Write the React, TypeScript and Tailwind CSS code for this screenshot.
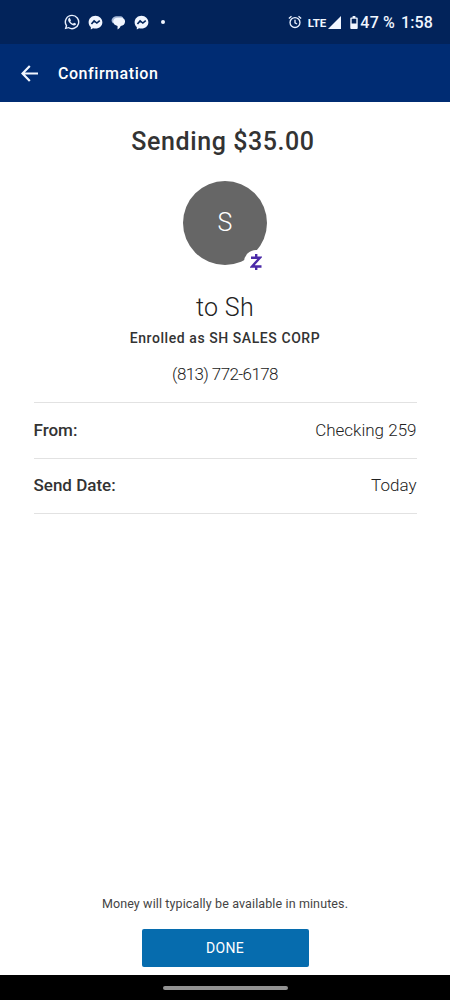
import React from "react";

function WhatsAppIcon() {
  return (
    <svg className="h-4 w-4" viewBox="0 0 24 24" fill="#e9f1ff">
      <path d="M12 1A11 11 0 0 0 2.6 17.7L1 23l5.5-1.5A11 11 0 1 0 12 1Zm0 2.1a8.9 8.9 0 1 1-4.9 16.3l-3 .8.8-2.9A8.9 8.9 0 0 1 12 3.1Z" />
      <path d="M8.9 6.5c-.4-.9-1.2-.9-1.7-.3-1.8 2-1 4.6 1.4 7.2 2.7 3 6.2 4.9 8.5 3.2.9-.7 1.2-1.6.9-2.1-.2-.4-2.2-1.3-2.7-1.4-.8-.2-1.1 1.2-1.8 1.4-1 .2-4-2.3-4-3.5 0-.6 1-1 .9-1.8L8.9 6.5Z" />
    </svg>
  );
}

function MessengerIcon() {
  return (
    <svg className="h-[15px] w-[15px]" viewBox="0 0 24 24" fill="none">
      <path d="M12 1C5.7 1 1 5.6 1 11.5c0 3.2 1.3 5.9 3.5 7.8V23l3.6-2c1.2.4 2.5.6 3.9.6 6.3 0 11-4.4 11-10.1S18.3 1 12 1Z" fill="#f1f6ff" />
      <path d="m5.5 14.5 4.3-5 4.3 3.4 4.7-3.9" stroke="#03265c" strokeWidth="2.6" />
    </svg>
  );
}

function ChatIcon() {
  return (
    <svg className="h-[15px] w-[15px]" viewBox="0 0 24 24">
      <path d="M3 13C0 10.5.5 6.500 3 4.500 5 2.500 7.500 2 10 2h5c2 0 3.500.800 4.500 2.500Z" fill="#a9bad8" />
      <path d="M3.500 10.500c0-3.700 3-6 7-6H16c4 0 6.500 2.500 6.500 6 0 4.300-3 7-7 7-.8 2.500-2.500 4.500-5 5.500v-5.600c-4-.5-7-3-7-6.900Z" fill="#f1f6ff" />
    </svg>
  );
}

function AlarmIcon() {
  return (
    <svg className="h-[14px] w-[14px]" viewBox="0 0 24 24" fill="none" stroke="#e9f1ff" strokeWidth="2.300">
      <circle cx="12" cy="13" r="8.500" />
      <path d="M12 8v5.500l3.500 2M1.500 6 6 2M22.500 6 18 2" />
    </svg>
  );
}

function StatusBar() {
  return (
    <div className="flex h-11 items-center bg-[#02235a] pr-[17px] pl-[64px] font-medium text-[#f1f6ff]">
      <div className="flex items-center gap-2">
        <WhatsAppIcon />
        <MessengerIcon />
        <ChatIcon />
        <MessengerIcon />
      </div>
      <span className="ml-[12px] h-1 w-1 rounded-full bg-[#f1f6ff]" />
      <div className="ml-auto flex items-center">
        <AlarmIcon />
        <span className="ml-[6px] pt-[2px] text-[11.500px] leading-4 font-bold">LTE</span>
        <svg className="ml-[2px] h-[13px] w-[13px]" viewBox="0 0 13 13" fill="#f1f6ff">
          <path d="M13 0v13H0Z" />
        </svg>
        <svg className="ml-[9px] h-[13px] w-[8px]" viewBox="0 0 8 14" fill="#f1f6ff">
          <path fillRule="evenodd" d="M2.500 0h3v1.500H7a1 1 0 0 1 1 1V13a1 1 0 0 1-1 1H1a1 1 0 0 1-1-1V2.500a1 1 0 0 1 1-1h1.500ZM1.500 3v5h5V3Z" />
        </svg>
        <span className="ml-[2px] pt-[2px] text-[16px] tracking-[0.200px]">47 %</span>
        <span className="ml-[6px] pt-[2px] text-[16px] tracking-[0.100px]">1:58</span>
      </div>
    </div>
  );
}

function Avatar() {
  return (
    <div className="relative mt-[23px] flex h-[84px] w-[84px] items-center justify-center rounded-full bg-[#666666] text-[25px] font-light text-white">
      S
      <span className="absolute top-[69px] left-[61px] flex h-6 w-6 items-center justify-center rounded-full bg-white">
        <svg className="h-[18px] w-[12px]" viewBox="0 0 12 18" fill="none" stroke="#4b2aa8" strokeWidth="2.400">
          <path d="M1 4.700h9L2 13.500H11.500M6.200 1v3.500M6.200 13.500v3.500" />
        </svg>
      </span>
    </div>
  );
}

function DetailRow({ label, children }: { label: string; children: React.ReactNode }) {
  return (
    <div className="flex h-[55.500px] items-center justify-between border-b border-[#e2e2e2] text-[17px]">
      <span className="font-medium text-[#333333]">{label}</span>
      <span className="font-light text-[#222222]">{children}</span>
    </div>
  );
}

export default function App() {
  return (
    <div className="flex h-[1000px] w-[450px] flex-col overflow-hidden bg-white font-['Roboto',sans-serif] text-[#333333]">
      <StatusBar />
      <header className="flex h-[58px] items-center bg-[#002c73] pl-[21px] text-white">
        <svg className="h-[17px] w-[17px]" viewBox="0 0 17 17" fill="none" stroke="#f1f6ff" strokeWidth="2.200">
          <path d="M8.800 1 1.500 8.500 8.800 16M1.500 8.500H17" />
        </svg>
        <h1 className="ml-5 pt-[2px] text-[16px] font-medium tracking-[0.550px]">Confirmation</h1>
      </header>
      <main className="flex flex-1 flex-col items-center">
        <h2 className="mt-[24px] pr-[4px] text-[25px] leading-8 font-medium tracking-[0.580px] text-[#333333]">Sending $35.00</h2>
        <Avatar />
        <p className="mt-[27px] mb-[-1px] text-[25px] leading-8 font-light tracking-[0.300px] text-[#222222]">to Sh</p>
        <p className="mt-[5px] text-[14px] leading-5 font-medium tracking-[0.570px]">Enrolled as SH SALES CORP</p>
        <p className="mt-[14px] text-[17px] leading-6 font-light tracking-[-0.600px] text-[#222222]">(813) 772-6178</p>
        <section className="mt-[16px] w-[383px] border-t border-[#e2e2e2]">
          <DetailRow label="From:">Checking 259</DetailRow>
          <DetailRow label="Send Date:">Today</DetailRow>
        </section>
        <p className="mt-auto text-[12.500px] leading-5 tracking-[0.120px] text-[#444444]">Money will typically be available in minutes.</p>
        <button className="mt-[15px] mb-[8px] h-[38px] w-[167px] rounded-[2px] bg-[#066cae] text-[14px] tracking-[0.300px] text-white">DONE</button>
      </main>
      <footer className="flex h-[25px] items-center justify-center bg-black">
        <div className="h-1 w-[125px] rounded-full bg-[#929292]" />
      </footer>
    </div>
  );
}
